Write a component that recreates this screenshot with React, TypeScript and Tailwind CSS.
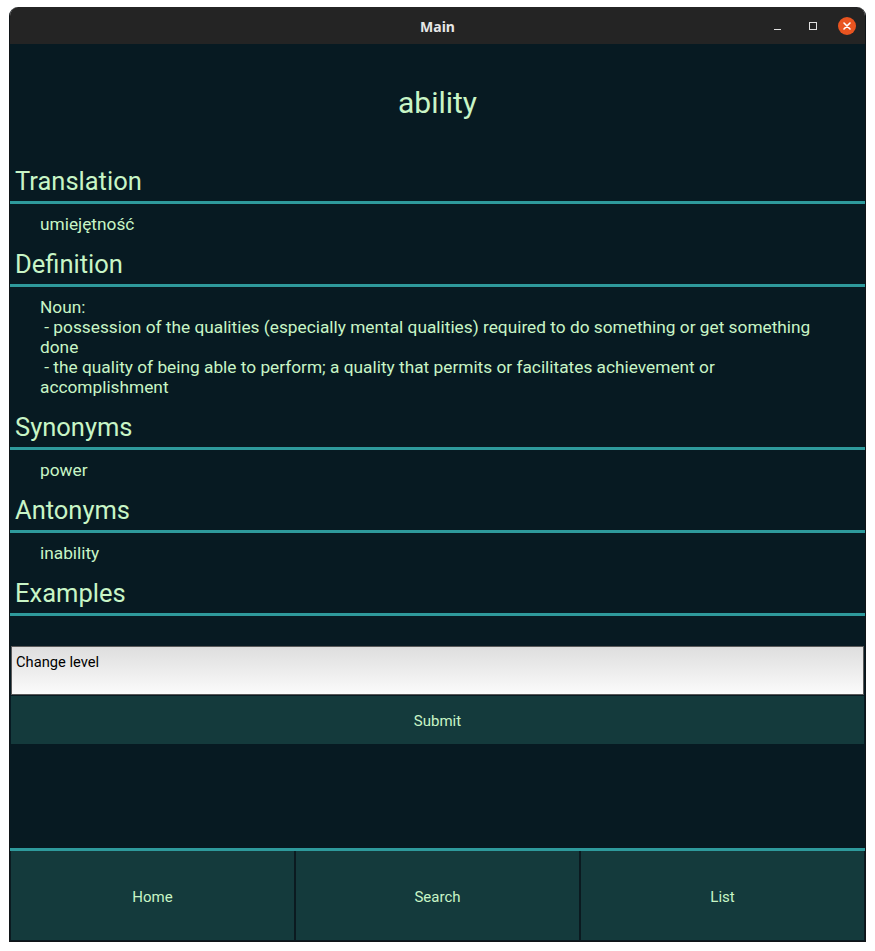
import React from "react";

const sections = [
  { title: "Translation", body: "umiejętność" },
  {
    title: "Definition",
    body:
      "Noun:\n - possession of the qualities (especially mental qualities) required to do something or get something done\n - the quality of being able to perform; a quality that permits or facilitates achievement or accomplishment",
  },
  { title: "Synonyms", body: "power" },
  { title: "Antonyms", body: "inability" },
];

function Heading({ title }: { title: string }) {
  return (
    <>
      <div className="h-[40px] flex items-center pl-[5px] text-[25.5px] text-[#c8f5c6]">{title}</div>
      <div className="h-[3px] bg-[#2e9a9c]" />
    </>
  );
}

export default function App() {
  return (
    <div className="w-[875px] h-[951px] bg-white pt-[7px] px-[9px] font-['Roboto',sans-serif]">
      <div className="h-[935px] flex flex-col rounded-t-[9px] overflow-hidden border-x border-b border-[#101417]">
        {/* title bar */}
        <div className="h-[37px] shrink-0 bg-[#242424] relative flex items-center justify-center pt-[1px]">
          <span className="text-[14px] font-bold text-[#e6e6e6] font-['Noto_Sans',sans-serif]">Main</span>
          <div className="absolute right-[9px] top-0 h-full flex items-center">
            <div className="w-[7px] h-[1px] bg-[#e0e0e0] mt-[8px]" />
            <div className="ml-[28px] w-[8px] h-[8px] border border-[#e0e0e0]" />
            <div className="ml-[21px] w-[18px] h-[18px] rounded-full bg-[#e95420] flex items-center justify-center">
              <svg width="10" height="10" viewBox="0 0 10 10">
                <path d="M2 2L8 8M8 2L2 8" stroke="#fff" strokeWidth="1.6" strokeLinecap="round" />
              </svg>
            </div>
          </div>
        </div>

        {/* content */}
        <div className="flex-1 bg-[#071a22] flex flex-col">
          <div className="h-[117px] flex items-center justify-center text-[30px] text-[#c8f5c6]">ability</div>

          {sections.map((s) => (
            <div key={s.title}>
              <Heading title={s.title} />
              <div className="py-[10px] pl-[30px] pr-[24px] text-[17.3px] leading-[20px] text-[#c8f5c6] whitespace-pre-wrap">
                {s.body}
              </div>
            </div>
          ))}

          <Heading title="Examples" />
          <div className="h-[30px]" />

          <div className="mx-[1px] h-[49px] border border-[#5a5a5a] bg-gradient-to-b from-[#dedede] to-[#fbfbfb] px-[4px] pt-[4px] text-[14.7px] text-black">
            Change level
          </div>
          <div className="mt-[1px] mx-[1px] h-[48px] pt-[2px] bg-[#143a3c] flex items-center justify-center text-[15px] text-[#c8f5c6]">
            Submit
          </div>

          <div className="flex-1" />

          <div className="h-[3px] bg-[#2e9a9c]" />
          <div className="h-[90px] grid grid-cols-3 gap-[2px] bg-[#0b1a20] px-[1px] pb-[1px]">
            {["Home", "Search", "List"].map((n) => (
              <div key={n} className="bg-[#143a3c] pt-[3px] flex items-center justify-center text-[15px] text-[#c8f5c6]">
                {n}
              </div>
            ))}
          </div>
        </div>
      </div>
    </div>
  );
}
